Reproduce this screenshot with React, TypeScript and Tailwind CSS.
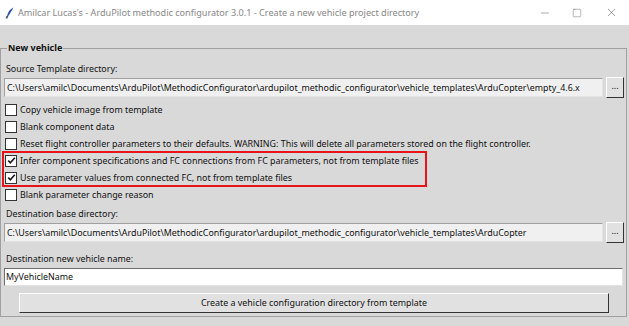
import { Minus, Square, X } from "lucide-react";

function Check({ checked, label }: { checked?: boolean; label: string }) {
  return (
    <div className="flex items-center h-[17px] pl-[4px]">
      <span className="w-[12px] h-[12px] border border-[#333] bg-white flex items-center justify-center shrink-0">
        {checked && (
          <svg width="9" height="9" viewBox="0 0 9 9">
            <path d="M1.2 4.5 L3.3 6.8 L7.8 1.8" stroke="#111" strokeWidth="1.5" fill="none" />
          </svg>
        )}
      </span>
      <span className="ml-[3px] whitespace-nowrap">{label}</span>
    </div>
  );
}

function PathEntry({ value }: { value: string }) {
  return (
    <div className="flex items-center gap-[3px] pl-[3px] pr-[2px]">
      <div className="flex-1 min-w-0 h-[19px] bg-[#f0f0f0] border border-[#a0a0a0] border-b-[#e3e3e3] border-r-[#e3e3e3] px-[2px] flex items-center whitespace-nowrap overflow-hidden">
        {value}
      </div>
      <button className="w-[18px] h-[21px] shrink-0 bg-[#e1e1e1] border border-white border-b-[#333] border-r-[#333] text-[9px] leading-none pb-[4px]">
        ...
      </button>
    </div>
  );
}

export default function App() {
  return (
    <div className="w-[629px] h-[326px] bg-[#d9d9d9] text-[8.9px] text-[#111] overflow-hidden flex flex-col" style={{ fontFamily: '"Noto Sans", "Open Sans", sans-serif' }}>
      {/* Title bar */}
      <div className="h-[25px] bg-white flex items-center shrink-0">
        <svg width="10" height="12" viewBox="0 0 10 12" className="ml-[5px]">
          <path d="M8.5 0.5 C5 2 3 5 2 9 L1.5 11.5 L2.5 11.5 C3 9 5.5 6 8.5 0.5 Z" fill="#2b4f9e" />
          <path d="M2 9 L1 11.5" stroke="#333" strokeWidth="0.8" />
        </svg>
        <span className="ml-[3px] text-[#888] text-[9.1px]">
          Amilcar Lucas's - ArduPilot methodic configurator 3.0.1 - Create a new vehicle project directory
        </span>
        <div className="ml-auto flex items-center text-[#555]">
          <div className="w-[32px] flex justify-center"><Minus size={12} strokeWidth={1} /></div>
          <div className="w-[32px] flex justify-center"><Square size={10} strokeWidth={1} /></div>
          <div className="w-[36px] flex justify-center"><X size={13} strokeWidth={1} /></div>
        </div>
      </div>

      <div className="flex-1 pt-[16px] pr-[2px] pb-[9px]">
        <fieldset className="h-full border border-[#a0a0a0] m-0 px-0 pb-[2px] pt-[6px]">
          <legend className="ml-[6px] px-[1px] font-bold text-[9px] leading-[14px]">New vehicle</legend>

          <div className="pl-[5px] h-[16px] flex items-center">Source Template directory:</div>
          <PathEntry value="C:\Users\amilc\Documents\ArduPilot\MethodicConfigurator\ardupilot_methodic_configurator\vehicle_templates\ArduCopter\empty_4.6.x" />

          <div className="mt-[3px]">
            <Check label="Copy vehicle image from template" />
            <Check label="Blank component data" />
            <Check label="Reset flight controller parameters to their defaults. WARNING: This will delete all parameters stored on the flight controller." />
            <div className="relative">
              <Check checked label="Infer component specifications and FC connections from FC parameters, not from template files" />
              <Check checked label="Use parameter values from connected FC, not from template files" />
              {/* annotation */}
              <div className="absolute left-[1px] top-[-1px] w-[425px] h-[36px] border-2 border-[#e8141b] pointer-events-none" />
            </div>
            <Check label="Blank parameter change reason" />
          </div>

          <div className="pl-[5px] h-[16px] flex items-center mt-[3px]">Destination base directory:</div>
          <PathEntry value="C:\Users\amilc\Documents\ArduPilot\MethodicConfigurator\ardupilot_methodic_configurator\vehicle_templates\ArduCopter" />

          <div className="pl-[5px] h-[16px] flex items-center mt-[8px]">Destination new vehicle name:</div>
          <div className="px-[3px] mt-[1px]">
            <div className="h-[18px] bg-white border border-[#707070] border-b-[#e3e3e3] border-r-[#e3e3e3] px-[1px] flex items-center">MyVehicleName</div>
          </div>

          <div className="pl-[18px] pr-[17px] mt-[7px]">
            <button className="w-full h-[20px] bg-[#e1e1e1] border border-white border-b-[#333] border-r-[#333] flex items-center justify-center">
              Create a vehicle configuration directory from template
            </button>
          </div>
        </fieldset>
      </div>
    </div>
  );
}
